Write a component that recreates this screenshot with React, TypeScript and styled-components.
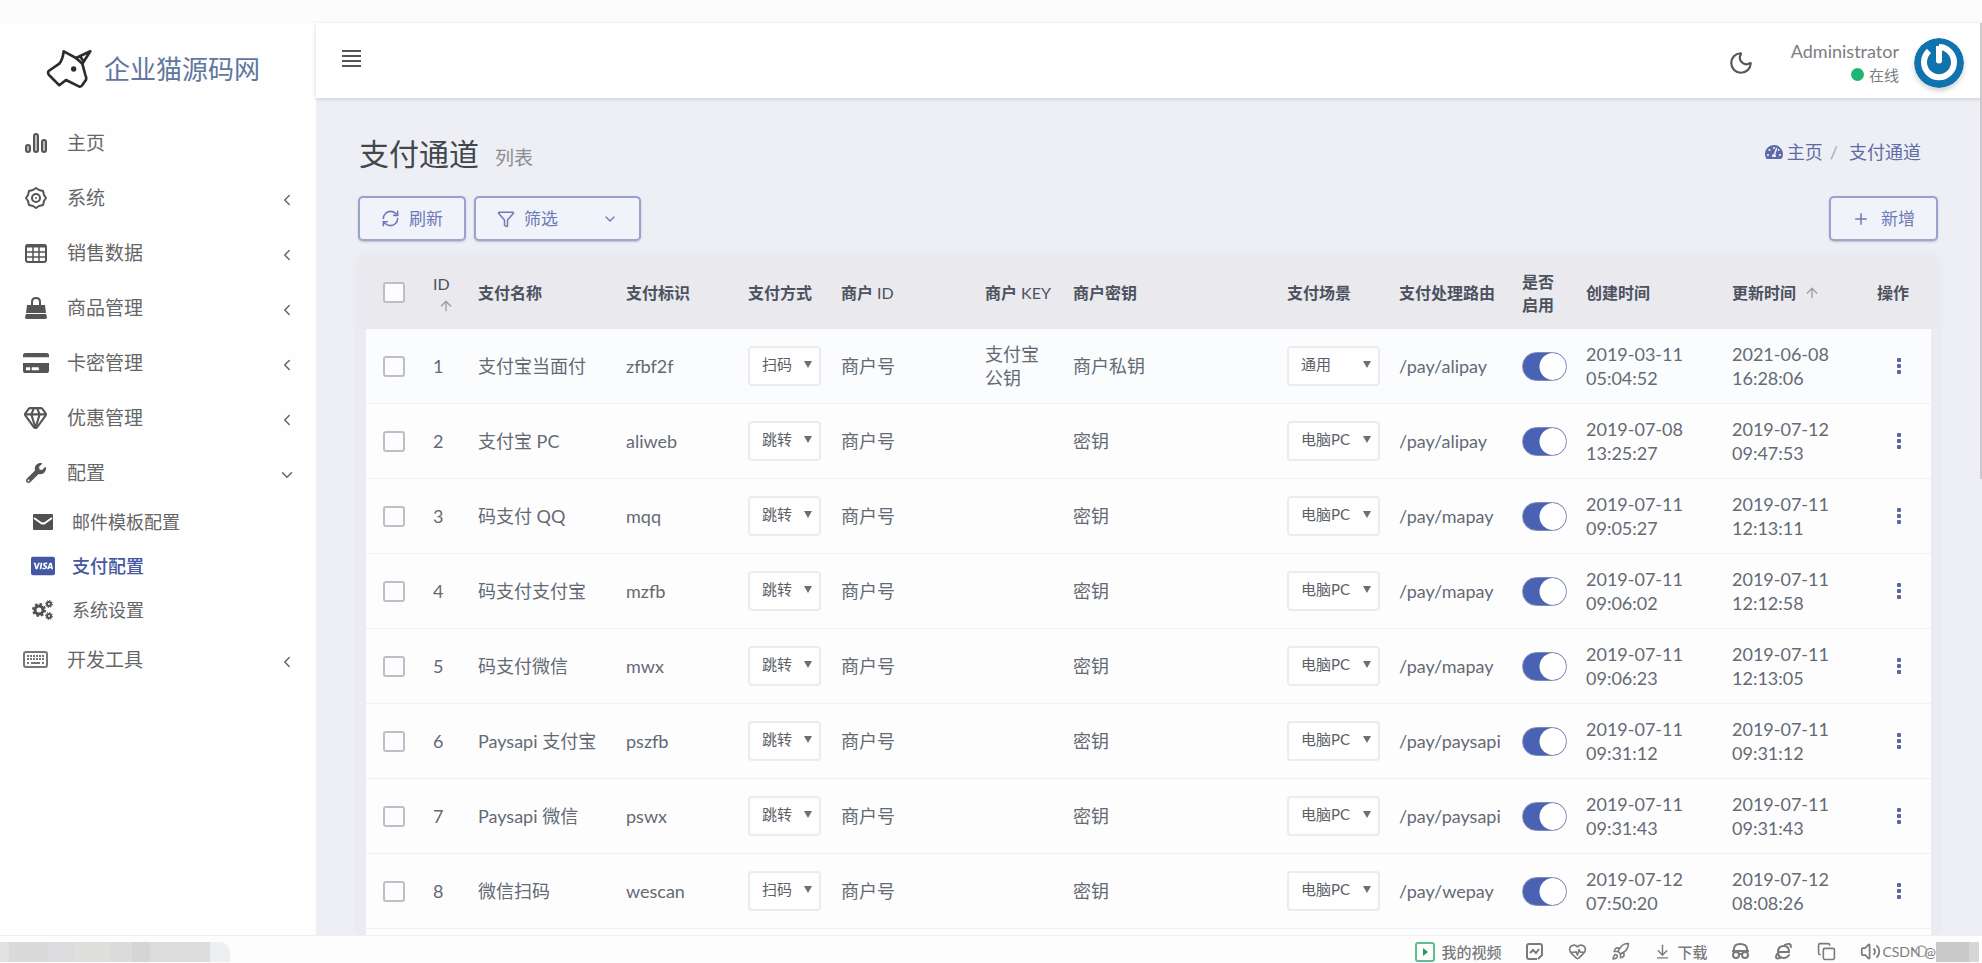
import React from "react";
import styled, { createGlobalStyle } from "styled-components";
import {
  FaCreditCard,
  FaWrench,
  FaCcVisa,
  FaTachometerAlt,
} from "react-icons/fa";
import {
  ChevronLeft,
  ChevronDown,
  Moon,
  RefreshCw,
  Filter,
  Plus,
  ArrowUp,
  Rocket,
  HeartPulse,
  ArrowDownToLine,
  Volume2,
  Copy,
  Search,
  Gem,
} from "lucide-react";

const GlobalStyle = createGlobalStyle`
  * { box-sizing: border-box; }
  body {
    margin: 0;
    background: #fff;
    color: #5c6066;
    font-family: Lato, "Noto Sans CJK SC", sans-serif;
    font-size: 18px;
    line-height: 24px;
  }
  a { color: inherit; text-decoration: none; }
  button, select, input { font: inherit; color: inherit; margin: 0; }
  svg { display: block; flex: none; }
`;

const Shell = styled.div`
  display: flex;
  flex-direction: column;
  height: 100vh;
  overflow: hidden;
`;

const TopStrip = styled.div`
  flex: none;
  height: 23px;
  background: #fcfcfc;
`;

const Workspace = styled.div`
  position: relative;
  display: flex;
  flex: 1;
  min-height: 0;
`;

const ScrollThumb = styled.div`
  position: absolute;
  top: 0;
  right: 0;
  width: 2px;
  height: 50%;
  background: #c9c9cd;
`;

const Sidebar = styled.aside`
  flex: none;
  width: 316px;
  background: #fefefe;
`;

const Brand = styled.a`
  display: flex;
  align-items: center;
  gap: 12px;
  height: 92px;
  padding: 0 0 0 46px;
  color: #61769d;
  font-size: 26px;
  line-height: 36px;
`;

const MenuItem = styled.a`
  display: flex;
  align-items: center;
  height: 55px;
  padding: 0 20px 0 22px;
  color: #666;
  font-size: 19px;
  > svg {
    margin-top: 4px;
  }
`;

const MenuIcon = styled.span<{ $wide?: boolean }>`
  display: flex;
  justify-content: center;
  width: 27px;
  margin-right: ${(p) => (p.$wide ? 16 : 18)}px;
  color: #555;
`;

const MenuLabel = styled.span`
  flex: 1;
`;

const SubItem = styled.a<{ $active?: boolean }>`
  display: flex;
  align-items: center;
  height: 44px;
  padding: 0 20px 0 29px;
  color: ${(p) => (p.$active ? "#4457a3" : "#666")};
  font-size: 18px;
  font-weight: ${(p) => (p.$active ? 500 : 400)};
  ${MenuIcon} {
    color: ${(p) => (p.$active ? "#4457a3" : "#505050")};
  }
`;

const Main = styled.main`
  display: flex;
  flex: 1;
  flex-direction: column;
  min-width: 0;
  background: #eeeff5;
`;

const Header = styled.header`
  display: flex;
  flex: none;
  align-items: center;
  height: 75px;
  padding: 4px 18px 0 26px;
  background: #fff;
  box-shadow: 0 1px 4px rgba(60, 60, 80, 0.2);
`;

const IconButton = styled.button`
  display: flex;
  padding: 0;
  border: 0;
  background: none;
  color: #555;
  cursor: pointer;
`;

const Burger = styled(IconButton)`
  margin: 0 auto 8px 0;
`;

const ActionButton = styled(IconButton)`
  padding: 0 20px;
`;

const User = styled.div`
  margin: 0 15px 0 37px;
  color: #7a7d82;
  text-align: right;
  line-height: 24px;
`;

const Status = styled.div`
  display: flex;
  align-items: center;
  justify-content: flex-end;
  gap: 5px;
  font-size: 15px;
`;

const Dot = styled.span`
  width: 13px;
  height: 13px;
  border-radius: 50%;
  background: #21b573;
`;

const Avatar = styled.svg`
  border-radius: 50%;
  box-shadow: 0 3px 5px rgba(0, 0, 0, 0.18);
`;

const Content = styled.section`
  display: flex;
  flex: 1;
  flex-direction: column;
  min-height: 0;
  padding: 35px 44px 0 42px;
  overflow: hidden;
`;

const TitleRow = styled.div`
  display: flex;
  align-items: center;
  justify-content: space-between;
  height: 44px;
`;

const Title = styled.h1`
  margin: 0;
  padding-left: 1px;
  color: #42474e;
  font-size: 30px;
  font-weight: 400;
  line-height: 44px;
  small {
    margin-left: 16px;
    color: #8a8d92;
    font-size: 19px;
  }
`;

const Breadcrumb = styled.nav`
  display: flex;
  align-items: center;
  margin: 0 17px 7px 0;
  color: #5f6ba6;
  a {
    display: flex;
    align-items: center;
    gap: 4px;
  }
  span {
    margin: 0 11px 0 7px;
    color: #a5a8b8;
  }
`;

const Toolbar = styled.div`
  display: flex;
  flex: none;
  gap: 8px;
  margin: 19px 0 15px;
`;

const OutlineButton = styled.button<{ $push?: boolean }>`
  display: flex;
  align-items: center;
  height: 45px;
  padding: 0 21px;
  gap: ${(p) => (p.$push ? 11 : 9)}px;
  margin-left: ${(p) => (p.$push ? "auto" : "0")};
  border: 2px solid #98a2cb;
  border-bottom-color: #a3a8c6;
  border-radius: 5px;
  background: #f1f3fa;
  color: #6d7ab5;
  font-size: 17px;
  box-shadow: 0 1px 2px rgba(80, 90, 150, 0.35);
  cursor: pointer;
`;

const FilterLabel = styled.span`
  margin-right: 35px;
`;

const Card = styled.div`
  flex: 1;
  min-height: 0;
  padding: 0 7px 0 8px;
  background: linear-gradient(#e9e9ee 73px, #ebebf1 73px);
  box-shadow: 0 0 8px rgba(90, 90, 130, 0.06);
`;

const TableArea = styled.div`
  height: 100%;
  overflow: hidden;
  background: #fdfdfe;
`;

const Table = styled.table`
  width: 100%;
  table-layout: fixed;
  border-collapse: separate;
  border-spacing: 0;
`;

const Th = styled.th<{ $wrap?: boolean }>`
  height: 73px;
  padding: 0 ${(p) => (p.$wrap ? 20 : 0)}px 0 0;
  background: #e9e9ee;
  color: #4c525e;
  font-size: 16px;
  font-weight: 700;
  line-height: 23px;
  text-align: left;
  white-space: ${(p) => (p.$wrap ? "normal" : "nowrap")};
`;

const LightText = styled.span`
  font-weight: 400;
`;

const SortHead = styled.span<{ $stack?: boolean }>`
  display: flex;
  flex-direction: ${(p) => (p.$stack ? "column" : "row")};
  align-items: ${(p) => (p.$stack ? "flex-start" : "center")};
  gap: ${(p) => (p.$stack ? 3 : 8)}px;
  font-weight: ${(p) => (p.$stack ? 400 : 700)};
  svg {
    margin-left: ${(p) => (p.$stack ? 5 : 0)}px;
    color: #9b9ea6;
  }
`;

const Row = styled.tr<{ $hover?: boolean }>`
  background: ${(p) => (p.$hover ? "#fafcfe" : "#fdfdfe")};
`;

const Td = styled.td<{ $wrap?: boolean }>`
  height: 75px;
  padding: 0 ${(p) => (p.$wrap ? 20 : 0)}px 0 0;
  border-bottom: 1px solid #f1f1f3;
  color: #646a73;
  white-space: ${(p) => (p.$wrap ? "normal" : "nowrap")};
`;

const Check = styled.input`
  display: block;
  width: 22px;
  height: 21px;
  margin-left: 17px;
  appearance: none;
  border: 2px solid #bcbfc6;
  border-radius: 3px;
  background: #fdfdff;
  &:checked {
    background: #4a62b3;
  }
`;

const SelectBox = styled.span<{ $wide?: boolean }>`
  display: grid;
  align-items: center;
  width: ${(p) => (p.$wide ? 93 : 73)}px;
  > * {
    grid-area: 1 / 1;
  }
  &::after {
    content: "";
    grid-area: 1 / 1;
    justify-self: end;
    margin: 0 9px 4px 0;
    border: 4px solid transparent;
    border-top: 7px solid #6b6e74;
    border-bottom: 0;
    pointer-events: none;
  }
`;

const Select = styled.select`
  height: 40px;
  padding: 0 0 4px 12px;
  appearance: none;
  border: 2px solid #ececef;
  border-radius: 4px;
  background: #fefefe;
  color: #5b5f66;
  font-size: 15px;
`;

const Toggle = styled.input`
  display: block;
  width: 45px;
  height: 29px;
  appearance: none;
  border: 1px solid #7f8bbb;
  border-radius: 15px;
  background: #fff;
  &:checked {
    background: radial-gradient(circle at 30px 50%, #fff 13px, #4a62b3 14px);
  }
`;

const StatusBar = styled.footer`
  display: flex;
  flex: none;
  align-items: center;
  justify-content: space-between;
  height: 28px;
  padding-top: 4px;
  border-top: 1px solid #f0f0f2;
  background: #fdfdfe;
  color: #7a7a7a;
  font-size: 15px;
`;

const Swatches = styled.div`
  display: flex;
  height: 20px;
`;

const Swatch = styled.span<{ $w: number; $c: string }>`
  width: ${(p) => p.$w}px;
  background: ${(p) => p.$c};
`;

const TabSwatches = styled(Swatches)`
  overflow: hidden;
  border-top-right-radius: 10px;
`;

const Tray = styled.div`
  display: flex;
  align-items: center;
  gap: 24px;
  padding-right: 3px;
`;

const TrayItem = styled.span`
  display: flex;
  align-items: center;
  gap: 6px;
  font-weight: 500;
`;

const Credit = styled.div`
  position: relative;
  display: flex;
  align-items: center;
  margin-left: -23px;
  color: #7c7c7c;
  font-size: 14px;
  svg {
    position: absolute;
    left: 32px;
    color: #a0a0a0;
  }
`;

const UnicornLogo = () => (
  <svg width="46" height="40" viewBox="110 34 138 120" fill="none" stroke="#2c2c2c" strokeWidth="8" strokeLinejoin="round" strokeLinecap="round">
    <path d="M163 41 Q160 66 150 78 L118 100 Q114 106 119 112 L150 143 L170 127 L210 147 Q216 148 219 142 L230 126 Q232 120 228 112 L219 78 L200 61 L180 50 Z" />
    <path d="M200 61 L243 41 L219 78 M212 56 L222 70" />
    <circle cx="193" cy="94" r="8" fill="#2c2c2c" stroke="none" />
  </svg>
);

const BarsIcon = () => (
  <svg width="24" height="20" viewBox="0 0 24 20" fill="#bdbdbd" stroke="currentColor" strokeWidth="2">
    <rect x="2" y="12" width="4" height="7" rx="2" />
    <rect x="10" y="1" width="4" height="18" rx="2" />
    <rect x="18" y="7" width="4" height="12" rx="2" />
  </svg>
);

const GearIcon = () => (
  <svg width="24" height="24" viewBox="0 0 24 24" fill="none" stroke="currentColor" strokeWidth="2">
    <path d="M12 2 L15 4 L19 5 L20 9 L22 12 L20 15 L19 19 L15 20 L12 22 L9 20 L5 19 L4 15 L2 12 L4 9 L5 5 L9 4 Z" strokeLinejoin="round" />
    <circle cx="12" cy="12" r="4" />
    <circle cx="12" cy="12" r="1" fill="currentColor" stroke="none" />
  </svg>
);

const GridIcon = () => (
  <svg width="22" height="20" viewBox="0 0 22 20" fill="none" stroke="currentColor">
    <rect x="1" y="2" width="20" height="17" rx="2" strokeWidth="2" />
    <path d="M1 3 H21" strokeWidth="3" />
    <path d="M1 9 H21 M1 14 H21 M8 3 V19 M14 3 V19" strokeWidth="1.500" />
  </svg>
);

const BagIcon = () => (
  <svg width="22" height="22" viewBox="0 0 22 22" fill="currentColor">
    <path d="M2 8 H20 L21 16 H1 Z M1 17 H21 L22 20 Q22 22 20 22 H2 Q0 22 0 20 Z" />
    <path d="M7 11 V5 Q7 1 11 1 Q15 1 15 5 V11" fill="none" stroke="currentColor" strokeWidth="2" />
  </svg>
);

const GearsIcon = () => (
  <svg width="22" height="20" viewBox="0 0 22 20" fill="none" stroke="currentColor">
    <circle cx="7" cy="10" r="4" strokeWidth="3" />
    <circle cx="7" cy="10" r="6" strokeWidth="2" strokeDasharray="2.400 2.300" />
    <circle cx="17" cy="4" r="2" strokeWidth="2" />
    <circle cx="17" cy="4" r="3.500" strokeWidth="1" strokeDasharray="1.400 1.300" />
    <circle cx="17" cy="16" r="2" strokeWidth="2" />
    <circle cx="17" cy="16" r="3.500" strokeWidth="1" strokeDasharray="1.400 1.300" />
  </svg>
);

const KeyboardIcon = () => (
  <svg width="25" height="17" viewBox="0 0 25 17" fill="none" stroke="#777">
    <rect x="1" y="1" width="23" height="15" rx="2" strokeWidth="2" />
    <path d="M4 5 H21 M4 8 H21" strokeWidth="2" strokeDasharray="2 1" />
    <path d="M4 12 H6 M8 12 H17 M19 12 H21" strokeWidth="2" />
  </svg>
);

const MailIcon = () => (
  <svg width="20" height="16" viewBox="0 0 20 16">
    <rect width="20" height="16" rx="1" fill="currentColor" />
    <path d="M1 4 L8 9 Q10 10 12 9 L19 4" fill="none" stroke="#fff" strokeWidth="2" />
  </svg>
);

const BurgerIcon = () => (
  <svg width="19" height="17" viewBox="0 0 19 17" stroke="currentColor" strokeWidth="2">
    <path d="M0 1H19M0 6H19M0 11H19M0 16H19" />
  </svg>
);

const DotsIcon = () => (
  <svg width="4" height="17" viewBox="0 0 4 17" fill="#5967a0">
    <rect width="4" height="4" rx="1" />
    <rect y="6" width="4" height="4" rx="1" />
    <rect y="12" width="4" height="4" rx="1" />
  </svg>
);

const PlayIcon = () => (
  <svg width="20" height="20" viewBox="0 0 20 20">
    <rect x="1" y="1" width="18" height="18" rx="2" fill="none" stroke="#5cc08c" strokeWidth="2" />
    <path d="M8 6 L13 10 L8 14 Z" fill="#1f9d5a" />
  </svg>
);

const ScreenshotIcon = () => (
  <svg width="19" height="19" viewBox="0 0 19 19" fill="none" stroke="currentColor" strokeWidth="2">
    <path d="M12 17 H4 Q2 17 2 15 V4 Q2 2 4 2 H15 Q17 2 17 4 V13 L13 17" />
    <path d="M5 11 L8 8 L11 11 L14 7" />
  </svg>
);

const IncognitoIcon = () => (
  <svg width="19" height="19" viewBox="0 0 19 19" fill="none" stroke="currentColor" strokeWidth="2">
    <path d="M3 9 V7 Q3 2 9 2 Q16 2 16 7 V9 M1 9 H18" />
    <circle cx="5" cy="13" r="3" />
    <circle cx="14" cy="13" r="3" />
    <path d="M8 12 H11" />
  </svg>
);

const BrowserIcon = () => (
  <svg width="19" height="19" viewBox="0 0 19 19" fill="none" stroke="currentColor" strokeWidth="2" strokeLinecap="round">
    <path d="M5 10 H15 Q15 4 10 4 Q4 4 4 10 Q4 16 10 16 Q13 16 15 13" />
    <path d="M11 3 Q17 0 17 5 M3 12 Q0 18 6 16" />
  </svg>
);

const menu = [
  { label: "主页", icon: <BarsIcon /> },
  { label: "系统", icon: <GearIcon />, more: true },
  { label: "销售数据", icon: <GridIcon />, more: true },
  { label: "商品管理", icon: <BagIcon />, more: true },
  { label: "卡密管理", icon: <FaCreditCard size={26} />, more: true },
  { label: "优惠管理", icon: <Gem size={25} />, more: true },
];

const rows = [
  ["支付宝当面付", "zfbf2f", "扫码", "支付宝公钥", "商户私钥", "通用", "/pay/alipay", "2019-03-11 05:04:52", "2021-06-08 16:28:06"],
  ["支付宝 PC", "aliweb", "跳转", "", "密钥", "电脑PC", "/pay/alipay", "2019-07-08 13:25:27", "2019-07-12 09:47:53"],
  ["码支付 QQ", "mqq", "跳转", "", "密钥", "电脑PC", "/pay/mapay", "2019-07-11 09:05:27", "2019-07-11 12:13:11"],
  ["码支付支付宝", "mzfb", "跳转", "", "密钥", "电脑PC", "/pay/mapay", "2019-07-11 09:06:02", "2019-07-11 12:12:58"],
  ["码支付微信", "mwx", "跳转", "", "密钥", "电脑PC", "/pay/mapay", "2019-07-11 09:06:23", "2019-07-11 12:13:05"],
  ["Paysapi 支付宝", "pszfb", "跳转", "", "密钥", "电脑PC", "/pay/paysapi", "2019-07-11 09:31:12", "2019-07-11 09:31:12"],
  ["Paysapi 微信", "pswx", "跳转", "", "密钥", "电脑PC", "/pay/paysapi", "2019-07-11 09:31:43", "2019-07-11 09:31:43"],
  ["微信扫码", "wescan", "扫码", "", "密钥", "电脑PC", "/pay/wepay", "2019-07-12 07:50:20", "2019-07-12 08:08:26"],
];

const columns = [67, 45, 148, 122, 93, 144, 88, 214, 112, 123, 64, 146, 145, 54];

const tabColors: [number, string][] = [
  [9, "#e2e2e3"], [39, "#dadada"], [27, "#dcdcdf"], [35, "#dfdfdd"], [22, "#dbdbdb"],
  [18, "#d5d5d5"], [60, "#dcdcdd"], [20, "#eeeff1"],
];

export default function App() {
  return (
    <>
      <GlobalStyle />
      <Shell>
        <TopStrip />
        <Workspace>
          <Sidebar>
            <Brand href="#">
              <UnicornLogo />
              企业猫源码网
            </Brand>
            <nav>
              {menu.map((m) => (
                <MenuItem href="#" key={m.label}>
                  <MenuIcon>{m.icon}</MenuIcon>
                  <MenuLabel>{m.label}</MenuLabel>
                  {m.more && <ChevronLeft size={18} />}
                </MenuItem>
              ))}
              <MenuItem href="#">
                <MenuIcon><FaWrench size={20} /></MenuIcon>
                <MenuLabel>配置</MenuLabel>
                <ChevronDown size={18} />
              </MenuItem>
              <SubItem href="#">
                <MenuIcon $wide><MailIcon /></MenuIcon>
                邮件模板配置
              </SubItem>
              <SubItem href="#" $active>
                <MenuIcon $wide><FaCcVisa size={24} /></MenuIcon>
                支付配置
              </SubItem>
              <SubItem href="#">
                <MenuIcon $wide><GearsIcon /></MenuIcon>
                系统设置
              </SubItem>
              <MenuItem href="#">
                <MenuIcon><KeyboardIcon /></MenuIcon>
                <MenuLabel>开发工具</MenuLabel>
                <ChevronLeft size={18} />
              </MenuItem>
            </nav>
          </Sidebar>
          <Main>
            <Header>
              <Burger aria-label="菜单"><BurgerIcon /></Burger>
              <IconButton aria-label="夜间模式"><Moon size={26} strokeWidth={2} /></IconButton>
              <User>
                Administrator
                <Status><Dot />在线</Status>
              </User>
              <Avatar width="50" height="50" viewBox="0 0 50 50">
                <circle cx="25" cy="25" r="25" fill="#1173ae" />
                <path d="M15 13 A15 15 0 1 0 35 13 Q31 9 25 9" fill="none" stroke="#fff" strokeWidth="6" />
                <path d="M22 8 H28 V24 Q25 27 22 24 Z" fill="#fff" />
              </Avatar>
            </Header>
            <Content>
              <TitleRow>
                <Title>支付通道<small>列表</small></Title>
                <Breadcrumb>
                  <a href="#"><FaTachometerAlt size={18} />主页</a>
                  <span>/</span>
                  <a href="#">支付通道</a>
                </Breadcrumb>
              </TitleRow>
              <Toolbar>
                <OutlineButton><RefreshCw size={19} />刷新</OutlineButton>
                <OutlineButton>
                  <Filter size={18} />
                  <FilterLabel>筛选</FilterLabel>
                  <ChevronDown size={16} />
                </OutlineButton>
                <OutlineButton $push><Plus size={18} />新增</OutlineButton>
              </Toolbar>
              <Card>
                <TableArea>
                  <Table>
                    <colgroup>
                      {columns.map((w, i) => <col key={i} width={w} />)}
                    </colgroup>
                    <thead>
                      <tr>
                        <Th><Check type="checkbox" aria-label="全选" /></Th>
                        <Th><SortHead $stack>ID<ArrowUp size={16} /></SortHead></Th>
                        <Th>支付名称</Th>
                        <Th>支付标识</Th>
                        <Th>支付方式</Th>
                        <Th>商户<LightText> ID</LightText></Th>
                        <Th>商户<LightText> KEY</LightText></Th>
                        <Th>商户密钥</Th>
                        <Th>支付场景</Th>
                        <Th>支付处理路由</Th>
                        <Th $wrap>是否启用</Th>
                        <Th>创建时间</Th>
                        <Th><SortHead>更新时间<ArrowUp size={16} /></SortHead></Th>
                        <Th>操作</Th>
                      </tr>
                    </thead>
                    <tbody>
                      {rows.map(([name, code, mode, key, secret, scene, route, created, updated], i) => (
                        <Row key={code} $hover={i === 0}>
                          <Td><Check type="checkbox" aria-label={name} /></Td>
                          <Td>{i + 1}</Td>
                          <Td>{name}</Td>
                          <Td>{code}</Td>
                          <Td>
                            <SelectBox>
                              <Select aria-label="支付方式" defaultValue={mode}>
                                <option>扫码</option>
                                <option>跳转</option>
                              </Select>
                            </SelectBox>
                          </Td>
                          <Td>商户号</Td>
                          <Td $wrap>{key}</Td>
                          <Td>{secret}</Td>
                          <Td>
                            <SelectBox $wide>
                              <Select aria-label="支付场景" defaultValue={scene}>
                                <option>通用</option>
                                <option>电脑PC</option>
                              </Select>
                            </SelectBox>
                          </Td>
                          <Td>{route}</Td>
                          <Td><Toggle type="checkbox" role="switch" defaultChecked aria-label="是否启用" /></Td>
                          <Td $wrap>{created}</Td>
                          <Td $wrap>{updated}</Td>
                          <Td>
                            <ActionButton aria-label="操作"><DotsIcon /></ActionButton>
                          </Td>
                        </Row>
                      ))}
                    </tbody>
                  </Table>
                </TableArea>
              </Card>
            </Content>
          </Main>
          <ScrollThumb />
        </Workspace>
        <StatusBar>
          <TabSwatches>
            {tabColors.map(([w, c], i) => <Swatch key={i} $w={w} $c={c} />)}
          </TabSwatches>
          <Tray>
            <TrayItem><PlayIcon />我的视频</TrayItem>
            <ScreenshotIcon />
            <HeartPulse size={19} />
            <Rocket size={19} />
            <TrayItem><ArrowDownToLine size={17} />下载</TrayItem>
            <IncognitoIcon />
            <BrowserIcon />
            <Copy size={19} />
            <Volume2 size={21} />
            <Credit>
              CSDN @
              <Search size={16} />
              <Swatches>
                <Swatch $w={33} $c="#c9c9ca" />
                <Swatch $w={10} $c="#d6d6d6" />
              </Swatches>
            </Credit>
          </Tray>
        </StatusBar>
      </Shell>
    </>
  );
}
